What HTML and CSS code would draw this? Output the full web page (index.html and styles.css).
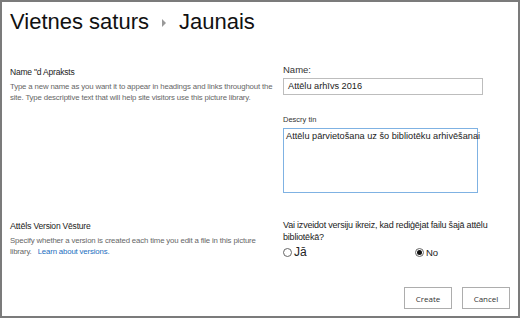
FILE: index.html
```html
<!DOCTYPE html>
<html lang="lv">
<head>
    <meta charset="UTF-8">
    <title>Jaunais</title>
    <link rel="stylesheet" href="styles.css">
</head>
<body>
    <div class="frame">
        <div class="title">
            <span>Vietnes saturs</span>
            <span class="crumb-arrow"></span>
            <span>Jaunais</span>
        </div>

        <div class="section first">
            <div class="side">
                <h3>Name "d Apraksts</h3>
                <p>Type a new name as you want it to appear in headings and links throughout the site. Type descriptive text that will help site visitors use this picture library.</p>
            </div>
            <div class="fields">
                <label class="lbl">Name:</label>
                <div class="input">Attēlu arhīvs 2016</div>
                <label class="lbl small">Descry tin</label>
                <div class="textarea">Attēlu pārvietošana uz šo bibliotēku arhivēšanai</div>
            </div>
        </div>

        <div class="section second">
            <div class="side">
                <h3><span class="dark">Attēls</span> Version Vēsture</h3>
                <p>
                    <span class="line">Specify whether a version is created each time you edit a file in this picture</span>
                    <span class="line">library.<a href="#">Learn about versions.</a></span>
                </p>
            </div>
            <div class="fields">
                <div class="question">Vai izveidot versiju ikreiz, kad rediģējat failu šajā attēlu bibliotēkā?</div>
                <div class="radios">
                    <span class="opt first-opt"><span class="radio"></span><span class="big">Jā</span></span>
                    <span class="opt"><span class="radio on"></span>No</span>
                </div>
            </div>
        </div>

        <div class="actions">
            <button class="btn">Create</button>
            <button class="btn">Cancel</button>
        </div>
    </div>
</body>
</html>
```

FILE: styles.css
```css
* {
    margin: 0;
    padding: 0;
    box-sizing: border-box;
}

html, body {
    width: 520px;
    height: 318px;
    overflow: hidden;
}

body {
    font-family: "Liberation Sans", Arial, sans-serif;
    background: #fff;
    color: #222;
}

.frame {
    width: 520px;
    height: 318px;
    border: 2px solid #7b7b7b;
    padding: 0 8px 0 8px;
    display: flex;
    flex-direction: column;
}

.title {
    display: flex;
    align-items: center;
    font-size: 22px;
    color: #111;
    height: 38px;
    padding-top: 2px;
}

.crumb-arrow {
    width: 0;
    height: 0;
    border-top: 4px solid transparent;
    border-bottom: 4px solid transparent;
    border-left: 4px solid #999;
    margin: 2px 13px 0 13px;
}

.section {
    display: flex;
}

.section.first {
    margin-top: 27px;
}

.section.second {
    margin-top: 28px;
}

.side {
    width: 273px;
    flex-shrink: 0;
    padding-right: 6px;
}

.side h3 {
    font-weight: normal;
    font-size: 8.5px;
    color: #222;
    letter-spacing: -0.2px;
    margin-bottom: 4px;
}

.side h3 .dark {
    font-size: 9px;
}

.side p {
    font-size: 7.8px;
    line-height: 11px;
    letter-spacing: -0.15px;
    color: #666;
}

.side .line {
    display: block;
    white-space: nowrap;
}

.side a {
    margin-left: 6px;
    color: #1a6ec0;
    text-decoration: none;
}

.fields {
    flex: 1;
    min-width: 0;
}

.lbl {
    display: block;
    font-size: 9.5px;
    color: #333;
    margin-top: -3px;
    margin-bottom: 3px;
}

.lbl.small {
    font-size: 7.5px;
    margin-top: 20px;
    margin-bottom: 4px;
}

.input {
    width: 200px;
    height: 17px;
    border: 1px solid #bdbdbd;
    font-size: 9.2px;
    padding: 2px 4px;
    color: #222;
}

.textarea {
    width: 195px;
    height: 65px;
    border: 1px solid #7fb2e3;
    font-size: 9.2px;
    padding: 2px 2px;
    color: #222;
    white-space: nowrap;
}

.question {
    font-size: 9px;
    line-height: 12px;
    letter-spacing: -0.2px;
    color: #222;
    margin-top: -2px;
}

.radios {
    display: flex;
    font-size: 9.5px;
    margin-top: 2px;
}

.opt {
    display: flex;
    align-items: center;
    gap: 2px;
}

.first-opt {
    flex: 0 0 132px;
}

.opt .big {
    font-size: 12px;
}

.radio {
    width: 9px;
    height: 9px;
    border: 1px solid #666;
    border-radius: 50%;
    display: inline-flex;
    align-items: center;
    justify-content: center;
}

.radio.on::after {
    content: "";
    width: 5px;
    height: 5px;
    border-radius: 50%;
    background: #111;
}

.actions {
    display: flex;
    justify-content: flex-end;
    gap: 10px;
    margin-top: auto;
    margin-bottom: 7px;
}

.btn {
    width: 48px;
    height: 22px;
    background: #fff;
    border: 1px solid #adadad;
    font-family: "Open Sans", "Noto Sans", sans-serif;
    font-size: 8px;
    color: #333;
}
```
